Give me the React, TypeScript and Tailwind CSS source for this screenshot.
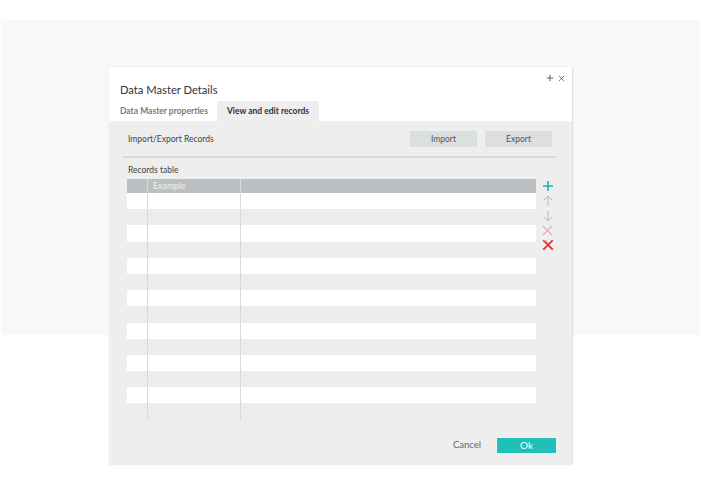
import { useState } from 'react';

const font = { fontFamily: 'Lato, "Open Sans", sans-serif' };

function Plus({ className }: { className?: string }) {
  return (
    <svg viewBox="0 0 12 12" className={className} fill="none" stroke="currentColor" strokeWidth={1.6}>
      <path d="M6 1v10M1 6h10" />
    </svg>
  );
}

function Arrow({ down, className }: { down?: boolean; className?: string }) {
  return (
    <svg viewBox="0 0 12 12" className={className} fill="none" stroke="currentColor" strokeWidth={1}>
      {down ? <path d="M6 1v10M2 7l4 4 4-4" /> : <path d="M6 11V1M2 5l4-4 4 4" />}
    </svg>
  );
}

function Cross({ double, className }: { double?: boolean; className?: string }) {
  return (
    <svg viewBox="0 0 14 12" className={className} fill="none" stroke="currentColor" strokeWidth={1.2}>
      <path d="M2 1l10 10M12 1L2 11" />
      {double && <path d="M4 1l9 10M13 1L3 11" />}
    </svg>
  );
}

export default function App() {
  const [tab, setTab] = useState('records');
  const rows = Array.from({ length: 14 }, (_, i) => i);

  return (
    <div className="relative h-[490px] w-[701px] overflow-hidden bg-white" style={font}>
      <div className="mx-px mt-[20px] h-[315px] bg-[#f8f8f8]" />

      <div className="absolute left-[109px] top-[67px] flex h-[398px] w-[464px] flex-col border-r border-[#e2e2e2] bg-white shadow-[0_0_2px_rgba(0,0,0,0.06)]">
        <div className="relative h-[34px] pl-[11px] pt-[16px] text-[11.2px] leading-[14px] text-[#333]">
          Data Master Details
          <div className="absolute right-[7px] top-[7px] flex items-center gap-[4px] text-[#666]">
            <Plus className="h-[8px] w-[8px]" />
            <svg viewBox="0 0 8 8" className="h-[7px] w-[7px]" fill="none" stroke="currentColor" strokeWidth={1}>
              <path d="M1 1l6 6M7 1L1 7" />
            </svg>
          </div>
        </div>

        <div className="flex h-[20px] items-stretch pl-[11px] text-[8.5px] font-bold">
          <button
            onClick={() => setTab('props')}
            className={`w-[97px] text-left ${tab === 'props' ? 'bg-[#eeeeee] text-[#333]' : 'text-[#7a7a7a]'}`}
          >
            Data Master properties
          </button>
          <button
            onClick={() => setTab('records')}
            className={`w-[102px] ${tab === 'records' ? 'bg-[#eeeeee] text-[#333]' : 'text-[#7a7a7a]'}`}
          >
            View and edit records
          </button>
        </div>

        <div className="flex flex-1 flex-col bg-[#eeeeee] pt-[10px]">
          <div className="flex h-[16px] items-center pl-[19px] pr-[20px] text-[8.5px] text-[#444]">
            <span className="flex-1">Import/Export Records</span>
            <button className="h-[16px] w-[67px] bg-[#dcdfe0] text-[#555]">Import</button>
            <button className="ml-[8px] h-[16px] w-[67px] bg-[#dcdfe0] text-[#555]">Export</button>
          </div>

          <div className="ml-[14px] mr-[16px] mt-[9px] h-[2px] bg-[#d9d9d9]" />

          <div className="ml-[19px] mt-[6px] h-[12px] text-[8.5px] leading-[12px] text-[#444]">Records table</div>

          <div className="ml-[18px] mt-[3px] flex">
            <div className="relative w-[409px]">
              <div className="flex h-[14px] items-center bg-[#bcbfc1] text-[8.7px] text-[#eef0f0]">
                <div className="w-[21px]" />
                <div className="w-[93px] pl-[5px]">Example</div>
              </div>
              {rows.map((r) => (
                <div key={r} className={`h-[16.2px] ${r % 2 === 0 ? 'bg-white' : 'bg-[#ebecec]'}`} />
              ))}
              <div className="absolute bottom-0 left-[20px] top-0 w-px bg-[#d8d8d8]" />
              <div className="absolute bottom-0 left-[113px] top-0 w-px bg-[#d8d8d8]" />
            </div>

            <div className="ml-[5px] flex flex-col items-center gap-[3px] pt-[1px]">
              <Plus className="h-[12px] w-[12px] text-[#1ab8b2]" />
              <Arrow className="h-[12px] w-[12px] text-[#b8b8b8]" />
              <Arrow down className="h-[12px] w-[12px] text-[#b8b8b8]" />
              <Cross className="h-[11px] w-[13px] text-[#f39a9a]" />
              <Cross double className="h-[12px] w-[13px] text-[#e8303a]" />
            </div>
          </div>

          <div className="mt-auto flex items-center justify-end pb-[11px] pr-[15px] text-[9.5px]">
            <button className="mr-[15px] text-[#666]">Cancel</button>
            <button className="h-[17px] w-[61px] border border-[#e8f8f7] bg-[#20bfb8] text-[10px] text-white">Ok</button>
          </div>
        </div>
      </div>
    </div>
  );
}
